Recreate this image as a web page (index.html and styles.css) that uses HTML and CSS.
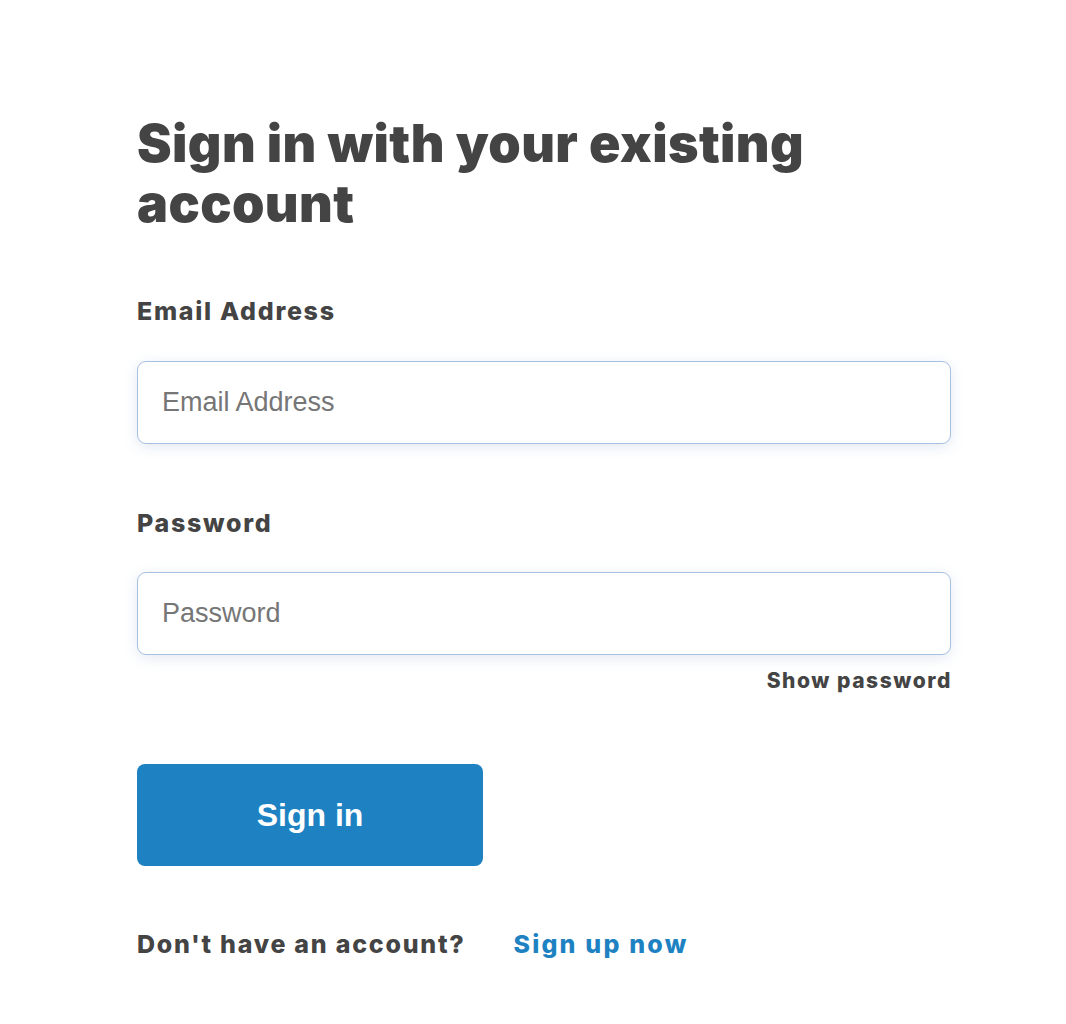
FILE: index.html
```html
<!DOCTYPE html>
<html lang="en">
<head>
<meta charset="utf-8">
<title>Sign in</title>
<link rel="stylesheet" href="styles.css">
</head>
<body>
<main class="page">
  <h1 class="title">Sign in with your existing account</h1>
  <form class="form">
    <label class="label" for="email">Email Address</label>
    <input class="input" id="email" type="email" placeholder="Email Address">
    <label class="label label-password" for="password">Password</label>
    <input class="input" id="password" type="password" placeholder="Password">
    <div class="show-row"><span class="show">Show password</span></div>
    <button class="btn" type="button">Sign in</button>
  </form>
  <p class="signup">Don't have an account?<a class="signup-link" href="#">Sign up now</a></p>
</main>
</body>
</html>
```

FILE: styles.css
```css
html, body {
  margin: 0;
  padding: 0;
  background: #ffffff;
}
body {
  font-family: Inter, "Open Sans", sans-serif;
  color: #444444;
}
.page {
  width: 814px;
  padding: 114px 0 0 137px;
}
.title {
  margin: 0;
  font-size: 52px;
  font-weight: 900;
  line-height: 60px;
  letter-spacing: 0.4px;
  width: 720px;
}
.form {
  display: flex;
  flex-direction: column;
  margin-top: 63px;
}
.label {
  font-size: 25px;
  font-weight: 800;
  line-height: 28px;
  letter-spacing: 1.7px;
}
.input {
  box-sizing: border-box;
  margin-top: 36px;
  width: 814px;
  height: 83px;
  border: 1.5px solid #a6c0e0;
  border-radius: 9px;
  padding: 0 24px;
  font-family: "Liberation Sans", Arial, sans-serif;
  font-size: 27px;
  color: #333;
  background: #fff;
  box-shadow: 0 3px 14px rgba(110, 145, 190, 0.2);
  outline: none;
}
.input::placeholder {
  color: #767676;
}
.label-password {
  margin-top: 65px;
}
.input + .label-password + .input {
  margin-top: 35px;
}
.show-row {
  display: flex;
  justify-content: flex-end;
  margin-top: 14px;
}
.show {
  font-size: 21px;
  font-weight: 800;
  line-height: 24px;
  letter-spacing: 1.55px;
  margin-right: -1px;
}
.btn {
  margin-top: 71px;
  width: 346px;
  height: 102px;
  border: 0;
  border-radius: 8px;
  background: #1e82c2;
  color: #fff;
  font-family: "Liberation Sans", Arial, sans-serif;
  font-size: 32px;
  font-weight: 700;
  cursor: pointer;
}
.signup {
  margin: 64px 0 0;
  font-size: 25px;
  font-weight: 800;
  line-height: 28px;
  letter-spacing: 1.75px;
}
.signup-link {
  margin-left: 48px;
  color: #1e82c2;
  text-decoration: none;
  letter-spacing: 2.2px;
}
```
